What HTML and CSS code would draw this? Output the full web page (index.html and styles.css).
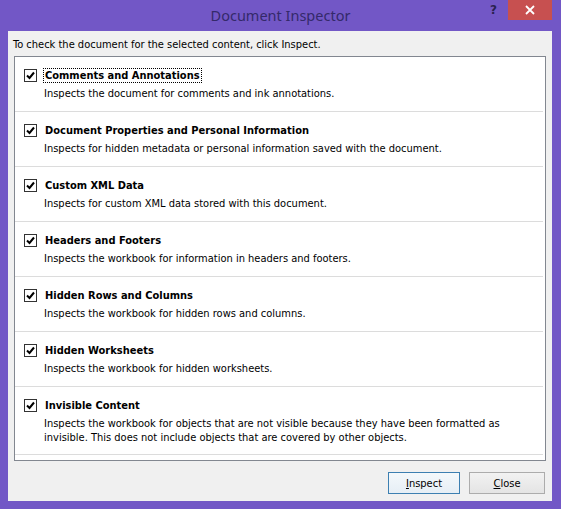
FILE: index.html
```html
<!DOCTYPE html>
<html>
<head>
<meta charset="utf-8">
<title>Document Inspector</title>
<link rel="stylesheet" href="styles.css">
</head>
<body>
<div class="window">
  <div class="titlebar">
    <div class="title">Document Inspector</div>
    <div class="help">?</div>
    <div class="close-x">
      <svg width="10" height="10" viewBox="0 0 10 10"><path d="M1 1 L9 9 M9 1 L1 9" stroke="#fff" stroke-width="1.8" fill="none"/></svg>
    </div>
  </div>
  <div class="client">
    <div class="intro">To check the document for the selected content, click Inspect.</div>
    <div class="list">
      <div class="item">
        <div class="row"><span class="cb"><svg width="11" height="11" viewBox="0 0 11 11"><path d="M2 5.5 L4.5 8 L9 2.5" stroke="#000" stroke-width="2" fill="none"/></svg></span><span class="name focus">Comments and Annotations</span></div>
        <div class="desc">Inspects the document for comments and ink annotations.</div>
      </div>
      <div class="item">
        <div class="row"><span class="cb"><svg width="11" height="11" viewBox="0 0 11 11"><path d="M2 5.5 L4.5 8 L9 2.5" stroke="#000" stroke-width="2" fill="none"/></svg></span><span class="name">Document Properties and Personal Information</span></div>
        <div class="desc">Inspects for hidden metadata or personal information saved with the document.</div>
      </div>
      <div class="item">
        <div class="row"><span class="cb"><svg width="11" height="11" viewBox="0 0 11 11"><path d="M2 5.5 L4.5 8 L9 2.5" stroke="#000" stroke-width="2" fill="none"/></svg></span><span class="name">Custom XML Data</span></div>
        <div class="desc">Inspects for custom XML data stored with this document.</div>
      </div>
      <div class="item">
        <div class="row"><span class="cb"><svg width="11" height="11" viewBox="0 0 11 11"><path d="M2 5.5 L4.5 8 L9 2.5" stroke="#000" stroke-width="2" fill="none"/></svg></span><span class="name">Headers and Footers</span></div>
        <div class="desc">Inspects the workbook for information in headers and footers.</div>
      </div>
      <div class="item">
        <div class="row"><span class="cb"><svg width="11" height="11" viewBox="0 0 11 11"><path d="M2 5.5 L4.5 8 L9 2.5" stroke="#000" stroke-width="2" fill="none"/></svg></span><span class="name">Hidden Rows and Columns</span></div>
        <div class="desc">Inspects the workbook for hidden rows and columns.</div>
      </div>
      <div class="item">
        <div class="row"><span class="cb"><svg width="11" height="11" viewBox="0 0 11 11"><path d="M2 5.5 L4.5 8 L9 2.5" stroke="#000" stroke-width="2" fill="none"/></svg></span><span class="name">Hidden Worksheets</span></div>
        <div class="desc">Inspects the workbook for hidden worksheets.</div>
      </div>
      <div class="item tall">
        <div class="row"><span class="cb"><svg width="11" height="11" viewBox="0 0 11 11"><path d="M2 5.5 L4.5 8 L9 2.5" stroke="#000" stroke-width="2" fill="none"/></svg></span><span class="name">Invisible Content</span></div>
        <div class="desc">Inspects the workbook for objects that are not visible because they have been formatted as<br>invisible. This does not include objects that are covered by other objects.</div>
      </div>
    </div>
    <div class="buttons">
      <button class="btn default"><u>I</u>nspect</button>
      <button class="btn"><u>C</u>lose</button>
    </div>
  </div>
</div>
</body>
</html>
```

FILE: styles.css
```css
html, body {
  margin: 0;
  padding: 0;
}
body {
  background: #7257c6;
  width: 561px;
  height: 509px;
  overflow: hidden;
  font-family: "DejaVu Sans Condensed", "DejaVu Sans", sans-serif;
  font-size: 11px;
  color: #000;
}
.window {
  width: 561px;
  height: 509px;
  display: flex;
  flex-direction: column;
}
.titlebar {
  height: 31px;
  position: relative;
  flex: none;
}
.title {
  text-align: center;
  font-family: "Noto Sans", "Open Sans", sans-serif;
  font-size: 14.5px;
  line-height: 31px;
  color: #34296a;
}
.help {
  position: absolute;
  left: 490px;
  top: 3px;
  font-family: "DejaVu Sans", sans-serif;
  font-weight: bold;
  font-size: 12px;
  color: #2a2150;
}
.close-x {
  position: absolute;
  left: 508px;
  top: 0;
  width: 44px;
  height: 20px;
  background: #c75050;
  display: flex;
  align-items: center;
  justify-content: center;
}
.client {
  margin: 0 9px 8px 8px;
  background: #f0f0f0;
  height: 470px;
  display: flex;
  flex-direction: column;
}
.intro {
  padding: 7px 0 0 5px;
  line-height: 13px;
  height: 18px;
}
.list {
  margin-left: 6px;
  width: 530px;
  height: 403px;
  border: 1px solid #828790;
  background: #fff;
}
.item {
  border-bottom: 1px solid #dcdcdc;
  margin-right: 2px;
  padding-left: 9px;
  box-sizing: border-box;
  height: 55px;
}
.item.tall {
  height: 68px;
}
.row {
  display: flex;
  align-items: center;
  padding-top: 12px;
  height: 13px;
}
.cb {
  width: 11px;
  height: 11px;
  border: 1px solid #333;
  background: #fff;
  display: flex;
  align-items: center;
  justify-content: center;
  flex: none;
  margin-right: 6px;
}
.name {
  font-weight: bold;
  line-height: 13px;
  padding: 0 1px;
  border: 1px dotted transparent;
}
.name.focus {
  border-color: #000;
}
.desc {
  padding-left: 20px;
  padding-top: 5px;
  line-height: 14px;
}
.buttons {
  display: flex;
  justify-content: flex-end;
  gap: 9px;
  padding: 11px 7px 0 0;
}
.btn {
  font-family: "DejaVu Sans Condensed", "DejaVu Sans", sans-serif;
  font-size: 11px;
  height: 22px;
  width: 76px;
  border: 1px solid #acacac;
  background: linear-gradient(#f2f2f2, #e4e4e4);
  color: #000;
  padding: 0;
}
.btn.default {
  width: 72px;
  border-color: #3c7fb1;
  background: linear-gradient(#f4f8fb, #e6eef5);
}
```
